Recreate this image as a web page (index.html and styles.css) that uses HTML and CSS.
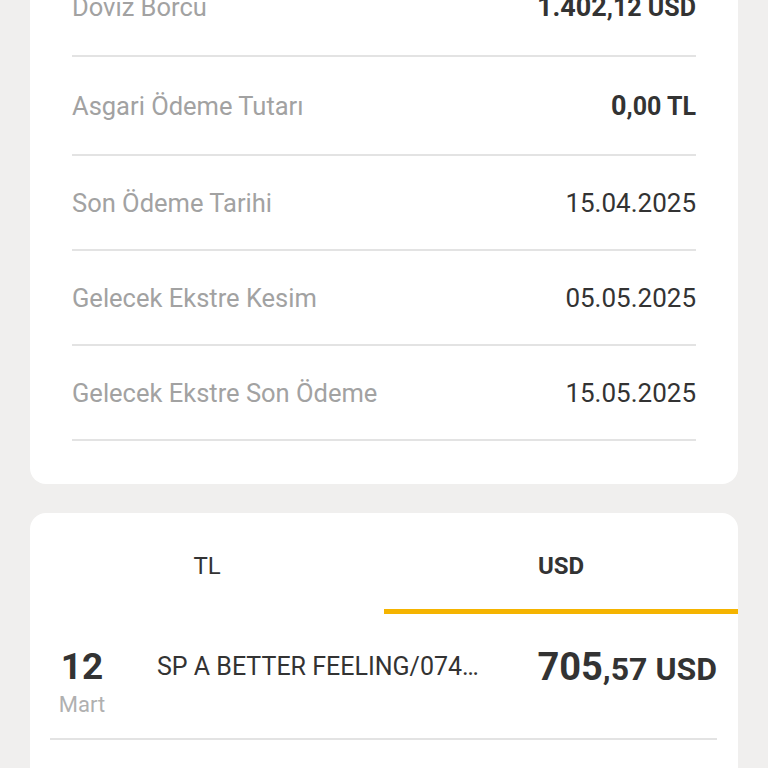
FILE: index.html
```html
<!DOCTYPE html>
<html lang="tr">
<head>
    <meta charset="UTF-8">
    <meta name="viewport" content="width=device-width, initial-scale=1.0">
    <title>Kart Detayı</title>
    <link rel="stylesheet" href="styles.css">
</head>
<body>

    <div class="page">

        <!-- Ekstre bilgileri -->
        <div class="card summary">
            <div class="row big">
                <span class="label">Döviz Borcu</span>
                <span class="value strong">1.402<small>,12 USD</small></span>
            </div>
            <div class="row big">
                <span class="label">Asgari Ödeme Tutarı</span>
                <span class="value strong">0<small>,00 TL</small></span>
            </div>
            <div class="row">
                <span class="label">Son Ödeme Tarihi</span>
                <span class="value">15.04.2025</span>
            </div>
            <div class="row">
                <span class="label">Gelecek Ekstre Kesim</span>
                <span class="value">05.05.2025</span>
            </div>
            <div class="row">
                <span class="label">Gelecek Ekstre Son Ödeme</span>
                <span class="value">15.05.2025</span>
            </div>
        </div>

        <!-- Hareketler -->
        <div class="card movements">
            <div class="tabs">
                <button class="tab">TL</button>
                <button class="tab active">USD</button>
            </div>

            <div class="tx-list">
                <div class="tx">
                    <div class="tx-date">
                        <span class="day">12</span>
                        <span class="month">Mart</span>
                    </div>
                    <div class="tx-desc">SP A BETTER FEELING/07404 ISTANBUL TR</div>
                    <div class="tx-amount">705<small>,57 USD</small></div>
                </div>
            </div>
        </div>

    </div>

</body>
</html>
```

FILE: styles.css
```css
/* Genel */
body {
    margin: 0;
    background-color: #f0efee;
    font-family: Roboto, 'Noto Sans', sans-serif;
    color: #333;
    overflow: hidden;
}

.page {
    display: flex;
    flex-direction: column;
    gap: 29px;
    padding: 0 30px;
    margin-top: -42px;
}

.card {
    background-color: #fff;
    border-radius: 16px;
}

/* Ekstre satirlari */
.summary {
    padding: 0 42px 43px;
    border-top-left-radius: 0;
    border-top-right-radius: 0;
}

.row {
    display: flex;
    justify-content: space-between;
    align-items: center;
    height: 93px;
    border-bottom: 2px solid #e3e3e3;
}

.row.big {
    height: 97px;
}

.label {
    font-size: 25.5px;
    color: #a2a2a2;
}

.value {
    font-size: 26px;
    color: #333;
}

.value.strong {
    font-weight: 700;
    font-size: 27px;
}

.value.strong small {
    font-size: 25px;
}

/* Sekmeler */
.tabs {
    display: flex;
}

.tab {
    flex: 1;
    background: none;
    border: none;
    border-bottom: 5px solid transparent;
    padding: 38px 0 28px;
    font-family: inherit;
    font-size: 24px;
    line-height: 30px;
    color: #333;
    cursor: pointer;
}

.tab.active {
    font-weight: 700;
    border-bottom-color: #f5b400;
}

/* Hareket listesi */
.movements {
    padding-bottom: 60px;
}

.tx-list {
    padding: 0 21px 0 20px;
}

.tx {
    display: flex;
    align-items: flex-start;
    padding: 33px 0 19px;
    border-bottom: 2px solid #e3e3e3;
}

.tx-date {
    width: 64px;
    display: flex;
    flex-direction: column;
    align-items: center;
}

.day {
    font-size: 37px;
    font-weight: 700;
    line-height: 40px;
}

.month {
    font-size: 22px;
    line-height: 28px;
    margin-top: 4px;
    color: #b0b0b0;
}

.tx-desc {
    flex: 1;
    margin: 0 48px 0 43px;
    font-size: 25px;
    line-height: 40px;
    white-space: nowrap;
    overflow: hidden;
    text-overflow: ellipsis;
}

.tx-amount {
    font-size: 38px;
    font-weight: 700;
    line-height: 40px;
    white-space: nowrap;
}

.tx-amount small {
    font-size: 32px;
}
```
